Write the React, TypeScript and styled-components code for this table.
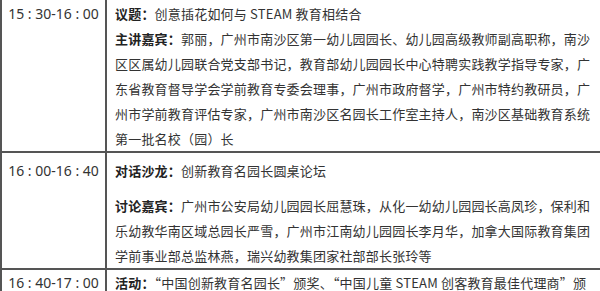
import styled, { createGlobalStyle } from 'styled-components'

const GlobalStyle = createGlobalStyle`
  html, body {
    margin: 0;
    padding: 0;
    background: #fff;
  }
  body {
    width: 600px;
    height: 291px;
    overflow: hidden;
    font-family: "Noto Sans", "Noto Sans CJK SC", sans-serif;
    color: #333;
  }
`

const Table = styled.div`
  width: 600px;
  border-left: 2px solid #555;
`

const Row = styled.div<{ $pad: number; $top?: boolean }>`
  display: grid;
  grid-template-columns: 103px 1fr;
  border-top: ${(p) => (p.$top ? '2px solid #555' : 'none')};
  line-height: 25px;
  & > div {
    padding-top: ${(p) => p.$pad}px;
  }
`

const TimeCell = styled.div`
  font-size: 14px;
  text-align: center;
  color: #333;
  white-space: nowrap;
`

const Content = styled.div`
  border-left: 2px solid #555;
  padding-left: 8px;
  font-family: "Noto Sans CJK SC", "Noto Sans", sans-serif;
  font-size: 13px;
  letter-spacing: 0.2px;
  width: 478px;
`

const Para = styled.p<{ $gap?: number }>`
  margin: ${(p) => p.$gap || 0}px 0 0;
`

const Label = styled.b`
  font-weight: 700;
  color: #222;
`

const schedule = [
  {
    time: '15 : 30-16 : 00',
    pad: 1,
    paras: [
      { label: '议题：', text: '创意插花如何与 STEAM 教育相结合' },
      {
        label: '主讲嘉宾：',
        text: '郭丽，广州市南沙区第一幼儿园园长、幼儿园高级教师副高职称，南沙区区属幼儿园联合党支部书记，教育部幼儿园园长中心特聘实践教学指导专家，广东省教育督导学会学前教育专委会理事，广州市政府督学，广州市特约教研员，广州市学前教育评估专家，广州市南沙区名园长工作室主持人，南沙区基础教育系统第一批名校（园）长',
      },
    ],
  },
  {
    time: '16 : 00-16 : 40',
    pad: 5,
    paras: [
      { label: '对话沙龙：', text: '创新教育名园长圆桌论坛' },
      {
        label: '讨论嘉宾：',
        text: '广州市公安局幼儿园园长屈慧珠，从化一幼幼儿园园长高凤珍，保利和乐幼教华南区域总园长严雪，广州市江南幼儿园园长李月华，加拿大国际教育集团学前事业部总监林燕，瑞兴幼教集团家社部部长张玲等',
        gap: 10,
      },
    ],
  },
  {
    time: '16 : 40-17 : 00',
    pad: 0,
    paras: [
      {
        label: '活动：',
        text: '“中国创新教育名园长”颁奖、“中国儿童 STEAM 创客教育最佳代理商”颁奖典礼',
      },
    ],
  },
]

const App = () => {
  return (
    <>
      <GlobalStyle />
      <Table>
        {schedule.map((item, i) => (
          <Row key={item.time} $pad={item.pad} $top={i > 0}>
            <TimeCell>{item.time}</TimeCell>
            <Content>
              {item.paras.map((p) => (
                <Para key={p.label} $gap={(p as any).gap}>
                  <Label>{p.label}</Label>
                  {p.text}
                </Para>
              ))}
            </Content>
          </Row>
        ))}
      </Table>
    </>
  )
}

export default App
